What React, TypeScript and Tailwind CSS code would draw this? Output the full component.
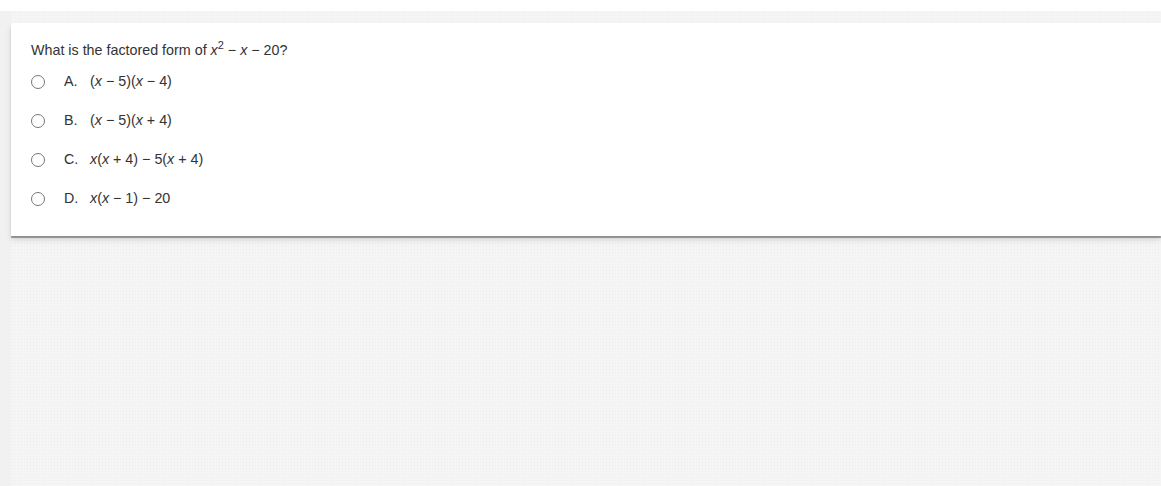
import React from 'react';

const options: { letter: string; expr: React.ReactNode }[] = [
    { letter: 'A.', expr: <>(<i>x</i> − 5)(<i>x</i> − 4)</> },
    { letter: 'B.', expr: <>(<i>x</i> − 5)(<i>x</i> + 4)</> },
    { letter: 'C.', expr: <><i>x</i>(<i>x</i> + 4) − 5(<i>x</i> + 4)</> },
    { letter: 'D.', expr: <><i>x</i>(<i>x</i> − 1) − 20</> },
];

const App: React.FC = () => {
    return (
        <div
            className="w-[1161px] h-[486px] bg-white pt-[11px] overflow-hidden text-[#333]"
            style={{ fontFamily: '"Liberation Sans", Arial, sans-serif' }}
        >
            <div className="flex h-full">
                <div className="w-[11px] shrink-0 bg-[#f1f1f1]" />
                <div className="flex-1 bg-[#f5f5f5] bg-[radial-gradient(#ececec_0.6px,transparent_0.8px)] bg-[length:3px_3px] pt-[12px]">
                    <div className="bg-white rounded-tl-[3px] h-[213px] shadow-[0_2px_1px_rgba(0,0,0,0.35),0_4px_6px_rgba(0,0,0,0.12)] pl-[20px] pt-[19px]">
                        <div className="text-[14.3px] leading-[16px]">
                            What is the factored form of <i>x</i>
                            <sup className="text-[11px] relative -top-[6px]">2</sup> − <i>x</i> − 20?
                        </div>
                        <div className="mt-[16px] flex flex-col gap-[23px]">
                            {options.map((o) => (
                                <div key={o.letter} className="flex items-center h-[16px] text-[14.3px]">
                                    <span className="w-[14px] h-[14px] rounded-full border border-[#777] bg-white shrink-0" />
                                    <span className="ml-[19px] w-[26px]">{o.letter}</span>
                                    <span>{o.expr}</span>
                                </div>
                            ))}
                        </div>
                    </div>
                </div>
            </div>
        </div>
    );
};

export default App;
